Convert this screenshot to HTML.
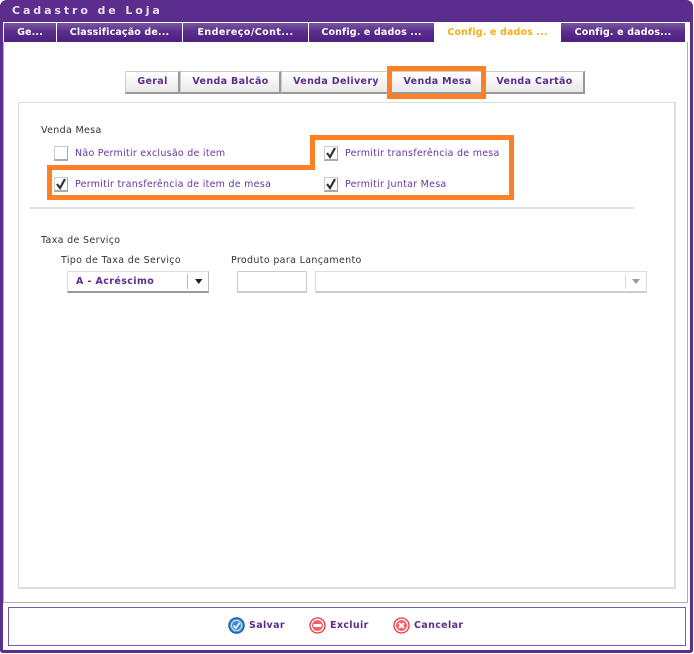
<!DOCTYPE html>
<html><head><meta charset="utf-8">
<style>
html,body{margin:0;padding:0;background:#fff}
#p{position:relative;width:694px;height:654px;overflow:hidden;background:#fff;font-family:"DejaVu Sans","Liberation Sans",sans-serif;font-size:9.5px}
#p div,#p svg{position:absolute}
.t{white-space:nowrap;line-height:12px}
.tab{top:22px;height:20px;box-sizing:border-box;border-left:1px solid #fff;border-top:1px solid #fff;background:linear-gradient(#7a569f,#5b2d8c 45%,#4d2080);color:#fff;font-weight:bold;font-size:9.5px;line-height:19px;text-align:center;white-space:nowrap;letter-spacing:.15px}
.sub{top:71px;height:23px;box-sizing:border-box;border:1px solid #ccc;border-right:2px solid #999;border-bottom:2px solid #999;background:linear-gradient(#fff,#e9e9e9);color:#5b2d8c;font-weight:bold;font-size:9.5px;line-height:20px;text-align:center;white-space:nowrap;letter-spacing:.35px;padding-left:1px}
.cb{width:14px;height:15px;box-sizing:border-box;border:1px solid #ccc;border-right-color:#aaa;border-bottom:2px solid #aaa;background:#fff}
.lbl{color:#6338a0;letter-spacing:.26px}
.blk{color:#333;letter-spacing:.33px}
.btn{color:#5b2d8c;font-weight:bold;font-size:9.5px;letter-spacing:.35px}
</style></head><body>
<div id="p">
<div style="left:0;top:0;width:693px;height:653px;box-sizing:border-box;border:3px solid #5b2d8c;border-top:0;border-radius:7px 7px 3px 3px"></div>
<div style="left:0;top:0;width:693px;height:22px;background:#5b2d8c;border-radius:7px 7px 0 0"></div>
<div class="t" style="left:12px;top:5px;color:#e8e0f0;font-weight:bold;font-size:11px;letter-spacing:2.9px">Cadastro de Loja</div>

<div class="tab" style="left:3px;width:53px">Ge...</div>
<div class="tab" style="left:56px;width:126px">Classificação de...</div>
<div class="tab" style="left:182px;width:126px;letter-spacing:.45px">Endereço/Cont...</div>
<div class="tab" style="left:308px;width:126px">Config. e dados ...</div>
<div class="tab" style="left:434px;width:127px;background:#fff;color:#f5ae14;border:0;line-height:21px">Config. e dados ...</div>
<div class="tab" style="left:561px;width:124px;border-left:0">Config. e dados...</div>

<div style="left:3px;top:42px;width:1px;height:561px;background:#a9b0ae"></div>
<div style="left:687px;top:42px;width:1px;height:561px;background:#a9b0ae"></div>
<div style="left:3px;top:602px;width:685px;height:1px;background:#a9b0ae"></div>

<div class="sub" style="left:125px;width:55px">Geral</div>
<div class="sub" style="left:180px;width:101px">Venda Balcão</div>
<div class="sub" style="left:281px;width:110px">Venda Delivery</div>
<div class="sub" style="left:391px;width:93px">Venda Mesa</div>
<div class="sub" style="left:484px;width:101px">Venda Cartão</div>

<div style="left:18px;top:102px;width:658px;height:487px;box-sizing:border-box;border:1px solid #ddd;border-right:2px solid #ddd;border-bottom:2px solid #ddd"></div>

<div class="t blk" style="left:41px;top:125px">Venda Mesa</div>
<div class="cb" style="left:54px;top:146px"></div>
<div class="t lbl" style="left:75px;top:148px">Não Permitir exclusão de item</div>
<div class="cb" style="left:324px;top:146px"></div>
<div class="t lbl" style="left:345px;top:148px">Permitir transferência de mesa</div>
<div class="cb" style="left:54px;top:177px"></div>
<div class="t lbl" style="left:75px;top:179px">Permitir transferência de item de mesa</div>
<div class="cb" style="left:324px;top:177px"></div>
<div class="t lbl" style="left:345px;top:179px">Permitir Juntar Mesa</div>

<svg style="left:0;top:0" width="694" height="654" viewBox="0 0 694 654" fill="none">
<path d="M327 153l3 4 5-9M57 184l3 4 5-9M327 184l3 4 5-9" stroke="#2c3340" stroke-width="2.2"/>
<rect x="389.500" y="68.500" width="94" height="28" stroke="#ff8024" stroke-width="5"/>
<path d="M49.500 167.500H312.500V137.500H511.500V197.500H49.500Z" stroke="#ff8024" stroke-width="5"/>
</svg>

<div style="left:29px;top:207px;width:605px;height:2px;background:#dfe3e1"></div>

<div class="t blk" style="left:41px;top:235px">Taxa de Serviço</div>
<div class="t blk" style="left:61px;top:255px">Tipo de Taxa de Serviço</div>
<div class="t blk" style="left:231px;top:255px">Produto para Lançamento</div>

<div style="left:67px;top:271px;width:142px;height:22px;box-sizing:border-box;border:1px solid #ddd;border-right-color:#bbb;border-bottom:2px solid #999;background:#fff"></div>
<div class="t" style="left:76px;top:276px;color:#5b2d8c;font-weight:bold;font-size:9.5px;letter-spacing:.4px">A - Acréscimo</div>
<div style="left:187px;top:274px;width:1px;height:15px;background:#bbb"></div>
<svg style="left:195px;top:279px" width="8" height="6"><path d="M0 0h7.500L3.750 5z" fill="#222"/></svg>

<div style="left:237px;top:271px;width:70px;height:22px;box-sizing:border-box;border:1px solid #ccc;border-bottom:2px solid #ccc;background:#fff"></div>
<div style="left:315px;top:271px;width:332px;height:22px;box-sizing:border-box;border:1px solid #ddd;border-bottom:2px solid #ccc;background:#fff"></div>
<div style="left:625px;top:274px;width:1px;height:15px;background:#ddd"></div>
<svg style="left:632px;top:279px" width="9" height="6"><path d="M0 0h8L4 5z" fill="#999"/></svg>

<div style="left:8px;top:607px;width:678px;height:39px;box-sizing:border-box;border:1px solid #7f56ab"></div>

<svg style="left:228px;top:617px" width="17" height="17" viewBox="0 0 17 17"><circle cx="8.500" cy="8.500" r="7.500" fill="#5b9be0" stroke="#1f5fa8" stroke-width="1.500"/><circle cx="8.500" cy="8.500" r="5" fill="#3f86d6" stroke="#cfe3f7"/><path d="M5.500 8.500l2.300 2.500 3.700-5" stroke="#fff" stroke-width="1.700" fill="none"/></svg>
<div class="t btn" style="left:249px;top:620px">Salvar</div>
<svg style="left:309px;top:617px" width="17" height="17" viewBox="0 0 17 17"><circle cx="8.500" cy="8.500" r="7.500" fill="#fff" stroke="#ee3340" stroke-width="1.300"/><circle cx="8.500" cy="8.500" r="5.500" fill="#f0656d"/><rect x="4.500" y="7" width="8" height="3" fill="#fff"/></svg>
<div class="t btn" style="left:330px;top:620px">Excluir</div>
<svg style="left:393px;top:617px" width="17" height="17" viewBox="0 0 17 17"><circle cx="8.500" cy="8.500" r="7.500" fill="#fff" stroke="#ee3340" stroke-width="1.300"/><circle cx="8.500" cy="8.500" r="5.500" fill="#f0656d"/><path d="M6 6l5 5M11 6l-5 5" stroke="#fff" stroke-width="2"/></svg>
<div class="t btn" style="left:414px;top:620px">Cancelar</div>
</div>
</body></html>
